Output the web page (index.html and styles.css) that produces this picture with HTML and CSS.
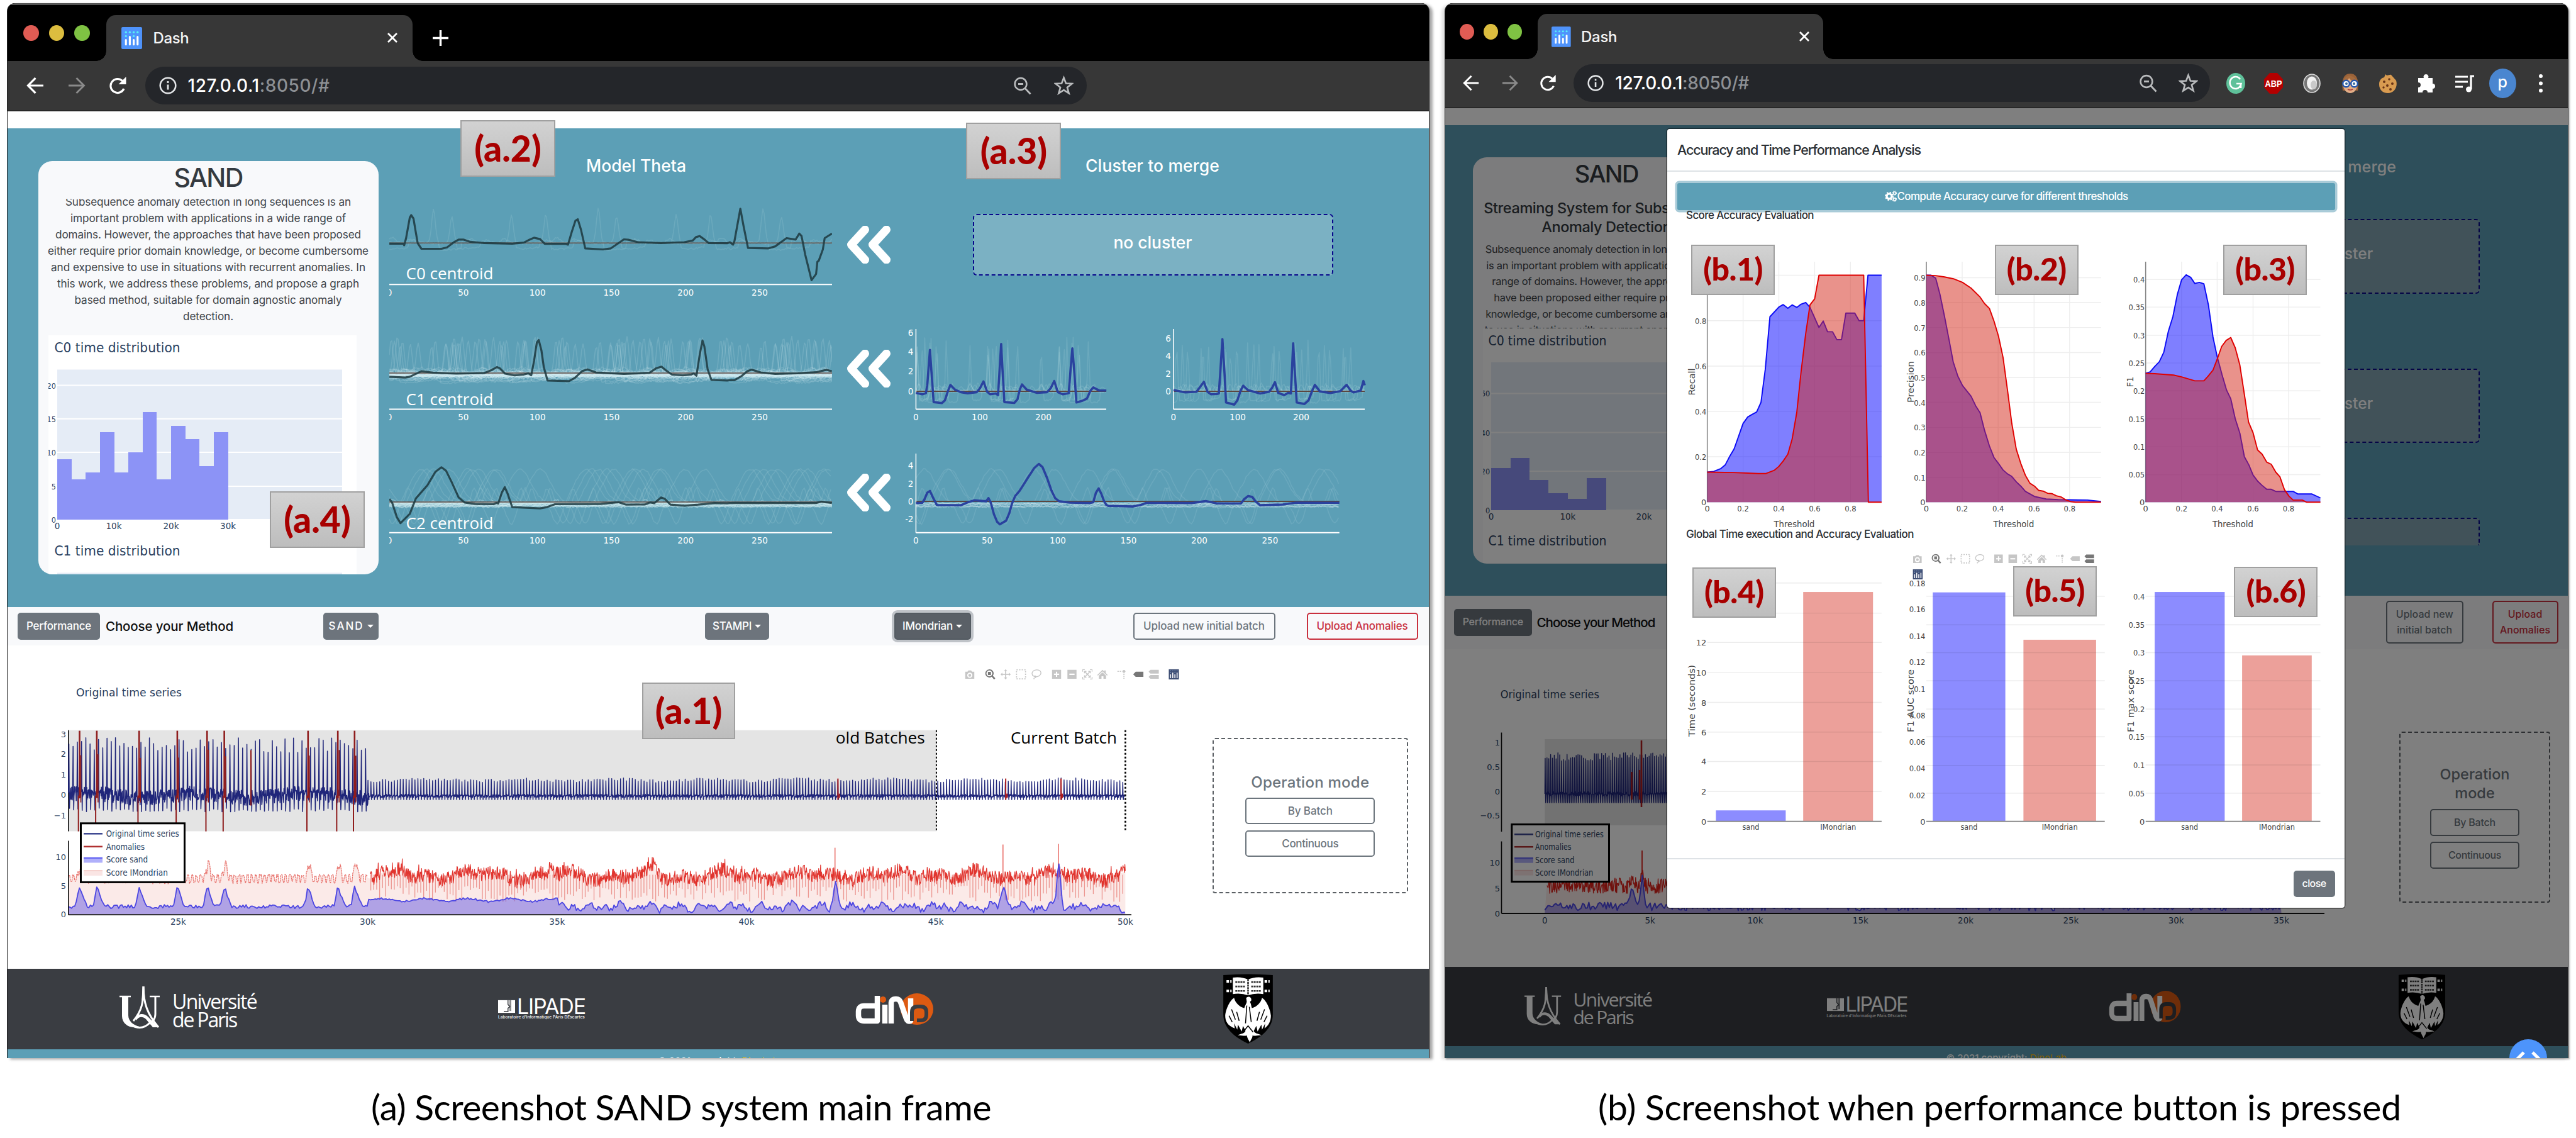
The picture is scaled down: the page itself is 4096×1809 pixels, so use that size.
FILE: index.html
```html
<!DOCTYPE html>
<html lang="en">
<head>
<meta charset="utf-8">
<title>SAND system</title>
<link rel="stylesheet" href="styles.css">
</head>
<body>
<svg class="defs" width="0" height="0" aria-hidden="true">
  <defs>
    <symbol id="i-dash" viewBox="0 0 32 34"><rect width="32" height="34" rx="2" fill="#4f93fb"/><g fill="#59f0f5"><circle cx="7" cy="8" r="1.6"/><circle cx="13" cy="8" r="1.6"/><circle cx="19" cy="8" r="1.6"/><circle cx="25" cy="8" r="1.6"/><circle cx="7" cy="14" r="1.6"/><circle cx="19" cy="14" r="1.6"/></g><g stroke="#fff" stroke-width="3" stroke-linecap="round"><path d="M7 20v7M13 15v12M19 20v7M25 15v12"/></g></symbol>
    <symbol id="i-close" viewBox="0 0 18 18"><path d="M2 2l14 14M16 2L2 16" stroke="#fff" stroke-width="2.8"/></symbol>
    <symbol id="i-back" viewBox="0 0 28 28"><path d="M27 14H3M14.500 2L2.500 14l12 12" fill="none" stroke="currentColor" stroke-width="3.2"/></symbol>
    <symbol id="i-fwd" viewBox="0 0 28 28"><path d="M1 14h24M13.500 2l12 12-12 12" fill="none" stroke="currentColor" stroke-width="3"/></symbol>
    <symbol id="i-reload" viewBox="0 0 28 28"><path d="M24 19a11 11 0 1 1-2.500-12.500" fill="none" stroke="#fff" stroke-width="3.2"/><path d="M27.500 0v12h-12z" fill="#fff"/></symbol>
    <symbol id="i-info" viewBox="0 0 28 28"><circle cx="14" cy="14" r="12.300" fill="none" stroke="#e4e6e8" stroke-width="2.600"/><path d="M14 12.500v8M14 7v3" stroke="#e4e6e8" stroke-width="2.800"/></symbol>
    <symbol id="i-mag" viewBox="0 0 28 28"><circle cx="11" cy="11" r="9.400" fill="none" stroke="#b9bbbd" stroke-width="2.600"/><path d="M18 18l8.500 9M7 11h8" stroke="#b9bbbd" stroke-width="2.800"/></symbol>
    <symbol id="i-star" viewBox="0 0 30 30"><path d="M15 3l3.300 8.600 9.200.5-7.200 5.800 2.500 9L15 21.800 7.200 26.900l2.500-9L2.500 12.100l9.200-.5z" fill="none" stroke="#b9bbbd" stroke-width="2.600"/></symbol>
    <symbol id="i-chev" viewBox="0 0 72 60"><path d="M30 6L8 30l22 24M64 6L42 30l22 24" fill="none" stroke="#fff" stroke-width="13" stroke-linecap="round" stroke-linejoin="round"/></symbol>
    <symbol id="i-gears" viewBox="0 0 20 18"><circle cx="7" cy="9" r="4" fill="none" stroke="#fff" stroke-width="3.200"/><circle cx="7" cy="9" r="6" fill="none" stroke="#fff" stroke-width="2" stroke-dasharray="2.350 2.350"/><circle cx="15.500" cy="4" r="2" fill="none" stroke="#fff" stroke-width="1.600"/><circle cx="15.500" cy="4" r="3.200" fill="none" stroke="#fff" stroke-width="1.200" stroke-dasharray="1.250 1.250"/><circle cx="15.500" cy="14" r="2" fill="none" stroke="#fff" stroke-width="1.600"/><circle cx="15.500" cy="14" r="3.200" fill="none" stroke="#fff" stroke-width="1.200" stroke-dasharray="1.250 1.250"/></symbol>
    <!-- plot mode bar -->
    <symbol id="m-camera" viewBox="0 0 16 16"><path fill-rule="evenodd" d="M1 4h3.500L6 2h4l1.500 2H15v11H1zM8 5.500a4 4 0 1 0 0 8 4 4 0 0 0 0-8zm0 1.800a2.200 2.200 0 1 1 0 4.400 2.200 2.200 0 0 1 0-4.400z"/></symbol>
    <symbol id="m-zoom" viewBox="0 0 16 16"><path fill-rule="evenodd" d="M6.700.3a6.300 6.300 0 1 0 3.600 11.500L14 16l2-1.800-3.900-4A6.300 6.300 0 0 0 6.700.3zm0 1.800a4.500 4.500 0 1 1 0 9 4.500 4.500 0 0 1 0-9z"/><path d="M4.500 4.300h4.600V9H4.500z"/></symbol>
    <symbol id="m-pan" viewBox="0 0 16 16"><path d="M8 0l2.500 3H8.800v4.200H13V5.500L16 8l-3 2.500V8.800H8.800V13h1.700L8 16l-2.500-3h1.700V8.800H3v1.700L0 8l3-2.500v1.700h4.200V3H5.500z"/></symbol>
    <symbol id="m-select" viewBox="0 0 16 16"><path d="M1 1h14v14H1z" fill="none" stroke="currentColor" stroke-width="1.800" stroke-dasharray="2 2"/></symbol>
    <symbol id="m-lasso" viewBox="0 0 16 16"><path d="M4 11C-.5 8.500.5 2 8 1.200c7-.5 9 5.500 4.500 9-3 2-6 2-8.500.8zm0 0c2-1.500 4 0 3 1.500S3 13 4.500 15.500" fill="none" stroke="currentColor" stroke-width="1.300"/></symbol>
    <symbol id="m-in" viewBox="0 0 16 16"><path fill-rule="evenodd" d="M1 1h14v14H1zM7 4v3H4v2h3v3h2V9h3V7H9V4z"/></symbol>
    <symbol id="m-out" viewBox="0 0 16 16"><path fill-rule="evenodd" d="M1 1h14v14H1zM4 7v2h8V7z"/></symbol>
    <symbol id="m-auto" viewBox="0 0 16 16"><path d="M.7 4V.7H4M12 .7h3.300V4M15.300 12v3.300H12M4 15.300H.7V12M4 4l8 8M12 4l-8 8M3.500 6.500v-3h3M9.500 3.500h3v3M12.500 9.500v3h-3M6.500 12.500h-3v-3" fill="none" stroke="currentColor" stroke-width="1.300"/></symbol>
    <symbol id="m-home" viewBox="0 0 16 16"><path d="M8 1L0 9l1 1 7-6.500L15 10l1-1-3-3V2h-2v2zM8 5l-5.500 5v5h4v-4h3v4h4v-5z"/></symbol>
    <symbol id="m-spike" viewBox="0 0 16 16"><path d="M2 3.500h7M12 7v8" stroke="currentColor" stroke-width="1.600" stroke-dasharray="2 1.500" fill="none"/><circle cx="12" cy="3.500" r="2.300"/></symbol>
    <symbol id="m-tag" viewBox="0 0 16 16"><path d="M0 8l4-4h12v8H4z"/></symbol>
    <symbol id="m-tags" viewBox="0 0 16 16"><path d="M0 4l3-3h13v6H3zM0 12l3-3h13v6H3z"/></symbol>
    <symbol id="m-logo" viewBox="0 0 16 16"><path d="M0 0h16v16H0z" fill="#3f4f75"/><path d="M3 8v6M6.300 5.500v8.500M9.600 8v6M13 5.500v8.500" stroke="#fff" stroke-width="1.500"/><path d="M2.500 2.700h11M2.500 5.200h1.200M9 5.200h1.200" stroke="#9fc5f3" stroke-width="1" stroke-dasharray="1.200 2.100"/></symbol>
    <!-- footer logos -->
    <symbol id="l-paris" viewBox="0 0 66 68"><path d="M0 16h18M48 16h16" stroke="#fff" stroke-width="2.500"/><path d="M4 16h10v30c0 9 8 16 18 18-14 4-28-3-28-17z" fill="#fff"/><path d="M9 50c4 14 26 22 39 8M57 16v28c0 8-5 13-10 15" fill="none" stroke="#fff" stroke-width="3"/><path d="M38 0c0 26-2 38-16 55M38 0c0 26 6 44 24 65" fill="none" stroke="#fff" stroke-width="3"/><path d="M25 50c4-7 14-8 20-2l17 17h-9L42 52c-5-4-11-5-15 2z" fill="#fff"/><path d="M36.500 0h3l1 22h-5z" fill="#fff"/></symbol>
    <symbol id="l-crest" viewBox="0 0 80 110"><path d="M1 2q39-3 78 0v62c0 22-18 36-39 46C19 100 1 86 1 64z" fill="#000"/><path d="M16 6q13-2 24 3 11-5 24-3v26q-13-2-24 2-11-4-24-2z" fill="#fff"/><path d="M40 9v25M20 13h15M20 20h15M20 27h15M45 13h15M45 20h15M45 27h15" stroke="#333" stroke-width="2.600" stroke-dasharray="3 1"/><path d="M6 12h8M6 27h8M66 12h8M66 27h8" stroke="#fff" stroke-width="4" stroke-dasharray="4 2"/><path d="M37 38c4-4 9-1 8 4l-2 2c2 4 2 7 3 10 8-2 14-8 16-16 6 3 13 17 14 28 0 9-4 16-10 20l1-8-5 10-1-8-6 11-2-9-4 8c2 5 8 4 12 7-8-1-9 2-14 0 0 5-3 6-4 11-2-4-4-6-5-11-5 2-8-1-14 0 4-3 10-2 12-7l-4-8-2 9-6-11-1 8-5-10 1 8C8 82 4 75 4 66c1-11 8-25 14-28 2 8 8 14 16 16 1-4 3-6 4-10z" fill="#fff"/><path d="M14 56l6 16M22 60l4 14M66 56l-6 16M58 60l-4 14M38 50l-2 28M42 52l3 24M32 92l8-10 8 10M10 66l5 10M70 66l-5 10" stroke="#000" stroke-width="1.500" fill="none"/></symbol>
    <symbol id="l-lipade" viewBox="0 0 36 27"><path d="M0 0h36v27H0z" fill="#fff"/><path d="M21 0v9l4 5-4 3v7h-9" fill="none" stroke="#3a3d42" stroke-width="2"/><path d="M24 0h4v23h-4z" fill="#3a3d42" opacity=".6"/></symbol>
  </defs>
</svg>

<main class="figure">
  <!-- ============ main frame ============ -->
  <figure class="shot shot-a">
    <div class="window">
      <div class="tabbar">
        <span class="dots"><i class="red"></i><i class="yellow"></i><i class="green"></i></span>
        <div class="tab"><svg class="favicon"><use href="#i-dash"/></svg><span class="tab-title">Dash</span><svg class="tab-x"><use href="#i-close"/></svg></div>
        <svg class="new-tab" viewBox="0 0 25 25"><path d="M12.500 0v25M0 12.500h25" stroke="#fff" stroke-width="3.400"/></svg>
      </div>
      <div class="toolbar">
        <svg class="nav back"><use href="#i-back"/></svg><svg class="nav fwd"><use href="#i-fwd"/></svg><svg class="nav reload"><use href="#i-reload"/></svg>
        <div class="url"><svg class="info"><use href="#i-info"/></svg><span class="addr" data-w="226">127.0.0.1<em>:8050/#</em></span><svg class="mag"><use href="#i-mag"/></svg><svg class="star"><use href="#i-star"/></svg></div>
      </div>
      <div class="page">
        <section class="hero">
          <article class="card">
            <h1 data-w="109">SAND</h1>
            <div class="abstract">
              <p><span data-w="454">Subsequence anomaly detection in long sequences is an</span><span data-w="438">important problem with applications in a wide range of</span><span data-w="486">domains. However, the approaches that have been proposed</span><span data-w="510">either require prior domain knowledge, or become cumbersome</span><span data-w="500">and expensive to use in situations with recurrent anomalies. In</span><span data-w="480">this work, we address these problems, and propose a graph</span><span data-w="425">based method, suitable for domain agnostic anomaly</span><span data-w="80">detection.</span></p>
            </div>
            <svg id="dist-a" class="dist" width="490.500" height="379.500" viewBox="77 533 490.500 379.500"></svg>
          </article>
          <div class="theta">
            <h2><span data-w="159">Model Theta</span></h2>
            <svg id="theta0" width="704.500" height="180" viewBox="618.500 300 704.500 180"></svg>
            <svg id="theta1" width="704.500" height="196" viewBox="618.500 480 704.500 196"></svg>
            <svg id="theta2" width="704.500" height="236" viewBox="618.500 676 704.500 236"></svg>
          </div>
          <div class="chevrons"><svg><use href="#i-chev"/></svg><svg><use href="#i-chev"/></svg><svg><use href="#i-chev"/></svg></div>
          <div class="merge">
            <h2><span data-w="213">Cluster to merge</span></h2>
            <div class="nocluster"><span data-w="125">no cluster</span></div>
            <svg id="merge1" width="736" height="196" viewBox="1440 480 736 196"></svg>
            <svg id="merge2" width="736" height="236" viewBox="1440 676 736 236"></svg>
          </div>
        </section>
        <section class="controls">
          <button class="btn solid perf"><span data-w="103">Performance</span></button><span class="choose" data-w="203">Choose your Method</span>
          <button class="btn solid m-sand"><span data-w="56">SAND</span><i class="caret"></i></button>
          <button class="btn solid m-stampi"><span data-w="62">STAMPI</span><i class="caret"></i></button>
          <button class="btn solid active m-imon"><span data-w="80">IMondrian</span><i class="caret"></i></button>
          <button class="btn line up-new"><span data-w="193">Upload new initial batch</span></button>
          <button class="btn danger up-anom"><span data-w="145">Upload Anomalies</span></button>
        </section>
        <section class="series">
          <svg id="series-a" width="1904" height="514" viewBox="12 1025.400 1904 514"></svg>
          <div class="mode"><h3><span data-w="188">Operation mode</span></h3><button class="btn line"><span data-w="71">By Batch</span></button><button class="btn line"><span data-w="90">Continuous</span></button></div>
        </section>
        <footer class="logos">
          <div class="paris"><svg><use href="#l-paris"/></svg><p><span data-w="134">Université</span><span data-w="102">de Paris</span></p></div>
          <div class="lipade"><p><svg><use href="#l-lipade"/></svg><span data-w="109">LIPADE</span></p><small data-w="138">Laboratoire d'Informatique PAris DEscartes</small></div>
          <svg class="dino" viewBox="0 0 123 50"><ellipse cx="97" cy="25" rx="26" ry="25" fill="#dd5a12"/><g fill="none" stroke="#fff" stroke-width="8.500" stroke-linejoin="round"><path d="M34 4v40H13q-9 0-9-9v-6q0-9 9-9h21"/><path d="M46 18v30"/><path d="M56 48V16q0-7 7-7h1q5 0 7 5l9 26q2 6 7 4V8"/></g><circle cx="43" cy="10" r="5" fill="#dd5a12"/><path d="M89 44V30q0-9 9-9h5q9 0 9 9v4q0 9-9 9h-6" fill="none" stroke="#3a3d42" stroke-width="6"/></svg>
          <svg class="crest"><use href="#l-crest"/></svg>
        </footer>
        <div class="strip"><span>© 2021 copyright: <b>DinoLab</b></span></div>
      </div>
    </div>
    <span class="badge a2">(a.2)</span><span class="badge a3">(a.3)</span><span class="badge a4">(a.4)</span><span class="badge a1">(a.1)</span>
    <figcaption><span data-w="986">(a) Screenshot SAND system main frame</span></figcaption>
  </figure>

  <!-- ============ performance dialog ============ -->
  <figure class="shot shot-b">
    <div class="window">
      <div class="tabbar">
        <span class="dots"><i class="red"></i><i class="yellow"></i><i class="green"></i></span>
        <div class="tab"><svg class="favicon"><use href="#i-dash"/></svg><span class="tab-title">Dash</span><svg class="tab-x"><use href="#i-close"/></svg></div>
      </div>
      <div class="toolbar">
        <svg class="nav back"><use href="#i-back"/></svg><svg class="nav fwd"><use href="#i-fwd"/></svg><svg class="nav reload"><use href="#i-reload"/></svg>
        <div class="url"><svg class="info"><use href="#i-info"/></svg><span class="addr" data-w="213">127.0.0.1<em>:8050/#</em></span><svg class="mag"><use href="#i-mag"/></svg><svg class="star"><use href="#i-star"/></svg></div>
        <div class="exts">
          <svg viewBox="0 0 30 33"><ellipse cx="15" cy="16.500" rx="15" ry="16.500" fill="#5fc19a"/><path d="M22 10a9 9.500 0 1 0 1.500 7H16M23 17v7" fill="none" stroke="#fff" stroke-width="2.600"/></svg>
          <svg viewBox="0 0 30 33"><path d="M9 0h12l9 10v13l-9 10H9L0 23V10z" fill="#b40000"/><text x="15" y="22" text-anchor="middle" textLength="27" lengthAdjust="spacingAndGlyphs" class="abp">ABP</text></svg>
          <svg viewBox="0 0 30 33"><ellipse cx="15" cy="16.500" rx="13" ry="14.500" fill="#777" stroke="#ddd" stroke-width="1.600"/><ellipse cx="15" cy="16" rx="8" ry="10.500" fill="#f2f2f2"/><ellipse cx="18" cy="19" rx="5" ry="7" fill="#c9c9c9"/></svg>
          <svg viewBox="0 0 30 33"><path d="M3 28C1 12 4 1 15 1s14 11 12 27z" fill="#9a6238"/><ellipse cx="15" cy="19" rx="11" ry="13" fill="#e2ad86"/><path d="M3 15C6 6 10 5 13 4c6 1 12 5 14 11-8-1-12-4-14-7-1 4-6 7-10 7z" fill="#a66c3e"/><circle cx="8.500" cy="17" r="5.300" fill="#fff" stroke="#2457b0" stroke-width="2.400"/><circle cx="21.500" cy="17" r="5.300" fill="#fff" stroke="#2457b0" stroke-width="2.400"/><circle cx="9" cy="17" r="2" fill="#3d6b9a"/><circle cx="21" cy="17" r="2" fill="#3d6b9a"/><path d="M11 26q4 2 8 0" stroke="#a33" stroke-width="1.500" fill="none"/></svg>
          <svg viewBox="0 0 30 33"><path d="M11 2c3 4 6 0 9 1l8 9c3 10-3 20-13 20C6 32 1 26 1 18 1 12 4 8 9 7z" fill="#d99b50"/><g fill="#6b3517"><circle cx="9" cy="14" r="2"/><circle cx="17" cy="10" r="1.800"/><circle cx="22" cy="17" r="2"/><circle cx="14" cy="20" r="2"/><circle cx="8" cy="23" r="1.700"/><circle cx="19" cy="26" r="2"/></g></svg>
          <svg viewBox="0 0 30 33"><path d="M2 8h9a4 4 0 1 1 7 0h7v9a4 4 0 1 1 0 8v6h-8a4 4 0 0 0-8 0H2v-8a4 4 0 0 0 0-8z" fill="#fff"/></svg>
          <svg viewBox="0 0 30 33"><path d="M0 6h20M0 14h20M0 22h12M25 26V5h5" stroke="#fff" stroke-width="3.200" fill="none"/><ellipse cx="21.500" cy="26" rx="4.500" ry="4.500" fill="#fff"/></svg>
          <span class="avatar">p</span>
          <svg viewBox="0 0 30 33"><g fill="#fff"><circle cx="15" cy="5" r="3"/><circle cx="15" cy="16.500" r="3"/><circle cx="15" cy="28" r="3"/></g></svg>
        </div>
      </div>
      <div class="page">
        <section class="hero">
          <article class="card">
            <h1 data-w="101">SAND</h1>
            <h4><span data-w="390">Streaming System for Subsequence</span><span data-w="206">Anomaly Detection</span></h4>
            <div class="abstract">
              <p><span data-w="385">Subsequence anomaly detection in long sequences</span><span data-w="382">is an important problem with applications in a wide</span><span data-w="364">range of domains. However, the approaches that</span><span data-w="358">have been proposed either require prior domain</span><span data-w="384">knowledge, or become cumbersome and expensive</span><span data-w="387">to use in situations with recurrent anomalies. In this</span></p>
            </div>
            <svg id="dist-b" class="dist" width="392" height="373.500" viewBox="2358.500 522 392 373.500"></svg>
          </article>
          <div class="merge">
            <h2><span data-w="200">Cluster to merge</span></h2>
            <div class="nocluster"><span data-w="118">no cluster</span></div>
            <div class="nocluster"><span data-w="118">no cluster</span></div>
            <div class="nocluster cut"></div>
          </div>
        </section>
        <section class="controls">
          <button class="btn solid perf"><span data-w="96">Performance</span></button><span class="choose" data-w="188">Choose your Method</span>
          <button class="btn line up-new"><span>Upload new<br>initial batch</span></button>
          <button class="btn danger up-anom"><span>Upload<br>Anomalies</span></button>
        </section>
        <section class="series">
          <svg id="series-b" width="1500" height="505" viewBox="2298 1032 1500 505"></svg>
          <div class="mode"><h3>Operation<br>mode</h3><button class="btn line"><span data-w="66">By Batch</span></button><button class="btn line"><span data-w="84">Continuous</span></button></div>
        </section>
        <footer class="logos">
          <div class="paris"><svg><use href="#l-paris"/></svg><p><span data-w="125">Université</span><span data-w="95">de Paris</span></p></div>
          <div class="lipade"><p><svg><use href="#l-lipade"/></svg><span data-w="98">LIPADE</span></p><small data-w="127">Laboratoire d'Informatique PAris DEscartes</small></div>
          <svg class="dino" viewBox="0 0 123 50" preserveAspectRatio="none"><ellipse cx="97" cy="25" rx="26" ry="25" fill="#dd5a12"/><g fill="none" stroke="#fff" stroke-width="8.500" stroke-linejoin="round"><path d="M34 4v40H13q-9 0-9-9v-6q0-9 9-9h21"/><path d="M46 18v30"/><path d="M56 48V16q0-7 7-7h1q5 0 7 5l9 26q2 6 7 4V8"/></g><circle cx="43" cy="10" r="5" fill="#dd5a12"/><path d="M89 44V30q0-9 9-9h5q9 0 9 9v4q0 9-9 9h-6" fill="none" stroke="#3a3d42" stroke-width="6"/></svg>
          <svg class="crest"><use href="#l-crest"/></svg>
        </footer>
        <div class="strip"><span>© 2021 copyright: <b>DinoLab</b></span></div>
        <div class="backdrop"></div>
        <div class="debug"><svg viewBox="0 0 60 60"><path d="M23 21l-9 9 9 9M37 21l9 9-9 9" fill="none" stroke="#fff" stroke-width="5"/></svg></div>
        <div class="modal">
          <header><span data-w="387">Accuracy and Time Performance Analysis</span></header>
          <div class="modal-body">
            <button class="compute"><svg><use href="#i-gears"/></svg><span data-w="367">Compute Accuracy curve for different thresholds</span></button>
            <h5 class="t1"><span data-w="203">Score Accuracy Evaluation</span></h5>
            <svg id="curves" width="1077" height="488" viewBox="2651.600 356 1077 488"></svg>
            <h5 class="t2"><span data-w="362">Global Time execution and Accuracy Evaluation</span></h5>
            <svg id="bars" width="1077" height="504" viewBox="2651.600 861.500 1077 504"></svg>
          </div>
          <div class="modal-foot"><button class="btn solid"><span data-w="38">close</span></button></div>
        </div>
      </div>
    </div>
    <span class="badge b1">(b.1)</span><span class="badge b2">(b.2)</span><span class="badge b3">(b.3)</span><span class="badge b4">(b.4)</span><span class="badge b5">(b.5)</span><span class="badge b6">(b.6)</span>
    <figcaption><span data-w="1275">(b) Screenshot when performance button is pressed</span></figcaption>
  </figure>
</main>
<script src="charts.js"></script>
</body>
</html>
```

FILE: styles.css
```css
* { box-sizing: border-box; }
body { margin: 0; width: 4096px; height: 1809px; overflow: hidden; background: #fff; font-family: Inter, "Liberation Sans", sans-serif; color: #343a40; }
h1, h2, h3, h4, h5, p, figure { margin: 0; font-weight: 500; }
svg { display: block; flex: none; }
button { font: inherit; margin: 0; padding: 0; }
.defs { position: absolute; }
[data-w] { white-space: nowrap; }

.figure { display: flex; padding: 5px 0 0 11px; }
.shot { position: relative; }
.shot-a { width: 2261.500px; --k: 1; --bar: 92px; --tool: 80px; }
.shot-b { width: 1786.500px; margin-left: 24.500px; --k: .934; --bar: 89px; --tool: 78px; }
.window { height: 1677px; display: flex; flex-direction: column; overflow: hidden; border-radius: 13px 13px 0 0; border-left: 1.500px solid #222; border-right: 1.500px solid #222; background: #373737; box-shadow: 5px 2px 4px rgba(0,0,0,.35); }
.shot-b .window { box-shadow: 2px 2px 3px rgba(0,0,0,.3), -5px 2px 4px rgba(0,0,0,.12); }

/* browser chrome */
.tabbar { flex: none; height: var(--bar); background: #000; border-top: 3px solid #555; display: flex; position: relative; }
.dots { display: flex; gap: calc(16.200px * var(--k)); margin: 31.500px 0 0 calc(25px * var(--k)); }
.dots i { width: calc(24.500px * var(--k)); height: 25.500px; border-radius: 50%; }
.shot-b .dots { margin-top: 29.500px; }
.red { background: #e05c54; } .yellow { background: #dcbd3f; } .green { background: #7fc243; }
.tab { position: relative; margin: 15.500px 0 0 calc(26.500px * var(--k)); width: calc(486.300px * var(--k)); background: #373737; border-radius: 15px 15px 0 0; display: flex; align-items: center; padding-left: calc(24px * var(--k)); }
.shot-b .tab { margin-top: 14px; }
.tab::before, .tab::after { content: ""; position: absolute; bottom: 0; width: 16px; height: 16px; }
.tab::before { left: -16px; background: radial-gradient(circle at 0 0, transparent 15.500px, #373737 16px); }
.tab::after { right: -16px; background: radial-gradient(circle at 100% 0, transparent 15.500px, #373737 16px); }
.favicon { width: calc(33px * var(--k)); height: 35px; }
.tab-title { color: #f4f4f4; font-size: 24px; margin-left: calc(17px * var(--k)); letter-spacing: -.3px; }
.tab-x { width: 18px; height: 18px; margin-left: auto; margin-right: calc(23px * var(--k)); }
.new-tab { width: 25px; height: 25px; margin: 40px 0 0 32px; }
.toolbar { flex: none; height: var(--tool); display: flex; align-items: center; border-bottom: 2px solid #282828; color: #fff; }
.nav { width: calc(28px * var(--k)); height: 28px; }
.back { margin-left: calc(30px * var(--k)); }
.fwd { margin-left: calc(38px * var(--k)); color: #8a8a8a; }
.reload { margin-left: calc(37px * var(--k)); }
.url { height: 60px; width: 1497px; margin-left: calc(29.500px * var(--k)); border-radius: 30px; background: #24262a; display: flex; align-items: center; padding: 0 21px; }
.shot-b .url { width: 1011.500px; }
.info { width: calc(28px * var(--k)); height: 28px; margin-left: 1px; }
.addr { font-size: 28px; margin-left: 18px; color: #fff; }
.addr em { font-style: normal; color: #8d9094; }
.mag { width: 28px; height: 29px; margin-left: auto; }
.star { width: 31px; height: 32px; margin-left: calc(36px * var(--k)); }
.shot-b .star { margin-right: -2px; }
.exts { display: flex; align-items: center; margin-left: 26px; gap: 30.700px; }
.exts svg { width: 30px; height: 33px; }
.avatar { width: 43px; height: 47px; margin: 0 -6.500px; border-radius: 50%; background: #4a86d0; font-size: 25px; line-height: 43px; text-align: center; }
.abp { font: 700 14px "Liberation Sans", sans-serif; fill: #fff; }

/* page */
.page { flex: 1; display: flex; flex-direction: column; position: relative; overflow: hidden; background: #fff; padding-top: 26.500px; }
.hero { flex: none; height: 761px; background: #5c9fb6; display: flex; color: #fff; }
.card { width: 541px; height: 657px; margin: 52px 0 0 48.500px; border-radius: 22px; background: #f8f9fb; color: #343a40; display: flex; flex-direction: column; align-items: center; overflow: hidden; }
.card h1 { font-size: 41px; line-height: 52px; height: 60.500px; font-weight: 500; flex: none; }
.abstract { flex: none; height: 217px; overflow: hidden; color: #3f4449; }
.abstract p { margin-top: -8px; font-size: 17.200px; font-weight: 400; line-height: 26.050px; display: flex; flex-direction: column; align-items: center; }
.dist { align-self: flex-start; margin-left: 16.300px; background: #fff; }
.theta { margin-left: 17px; }
.hero h2 { height: 96.400px; padding-top: 44.500px; font-size: 26.500px; line-height: 30px; font-weight: 500; }
.theta h2 { padding-left: 313.500px; }
.chevrons { margin: 155.400px 0 0 22px; display: flex; flex-direction: column; gap: 137px; }
.chevrons svg { width: 73px; height: 60px; }
.merge { margin-left: 22px; width: 736px; }
.merge h2 { padding-left: 286px; }
.nocluster { width: 573px; height: 98.500px; margin: 39.700px 0 41.800px 106.500px; padding-bottom: 8px; border: 2.500px dashed #08088c; border-radius: 6px; background: #7bb1c3; display: flex; align-items: center; justify-content: center; font-size: 26.500px; font-weight: 500; }

.btn { display: flex; align-items: center; justify-content: center; height: 43px; border-radius: 5px; font-size: 17px; line-height: 26px; border: 2px solid #6c757d; background: none; color: #6c757d; flex: none; }
.solid { background: #6d747c; color: #fff; }
.danger { border-color: #c9303e; color: #c9303e; }
.active { background: #5a6067; border-color: #545b62; box-shadow: 0 0 0 4px #bfc3c8; }
.caret { border: 5px solid transparent; border-top-color: #fff; border-bottom: 0; margin-left: 5px; }
.controls { flex: none; height: 61px; background: #f8f9fb; display: flex; align-items: center; }
.perf { width: 131px; margin-left: 16px; }
.choose { margin-left: 9px; font-size: 20.500px; color: #111; }
.m-sand { width: 88px; margin-left: 143px; }
.m-stampi { width: 102px; margin-left: 518.500px; }
.m-imon { width: 122px; margin-left: 199px; }
.up-new { width: 226px; margin-left: 258px; }
.up-anom { width: 177px; margin-left: 50px; }
.series { flex: none; height: 514px; display: flex; }
.mode { width: 311.500px; height: 246.500px; margin: 147.500px 0 0 11.500px; border: 2.500px dashed #5a5f64; border-radius: 4px; padding-top: 56px; display: flex; flex-direction: column; align-items: center; gap: 9.500px; }
.mode h3 { font-size: 24px; line-height: 25px; height: 27px; color: #6c757d; font-weight: 500; text-align: center; }
.mode .btn { width: 206px; height: 42.500px; flex: none; }
.logos { flex: none; height: 128px; background: #3a3d42; color: #fff; display: flex; align-items: flex-start; }
.paris { display: flex; margin: 28.500px 0 0 178px; width: 220px; }
.paris svg { width: 66px; height: 68px; }
.paris p { margin: 9px 0 0 18px; font: 400 32px/29px "Open Sans", "Noto Sans", sans-serif; display: flex; flex-direction: column; align-items: flex-start; }
.lipade { margin: 47px 0 0 382px; width: 139px; }
.lipade p { display: flex; align-items: center; height: 26px; }
.lipade p svg { width: 27px; height: 26px; }
.lipade p span { font: 400 34px/26px Inter, sans-serif; margin-left: 3px; }
.lipade small { display: block; width: max-content; font-size: 6.500px; line-height: 9px; }
.dino { width: 123px; height: 50px; margin: 39px 0 0 430px; overflow: visible; }
.crest { width: 81px; height: 111px; margin: 8.500px 0 0 460px; }
.strip { flex: 1; background: #5c9fb6; overflow: hidden; }
.strip span { display: block; text-align: center; padding-top: 9px; font-size: 15px; line-height: 20px; color: #fff; }
.strip b { color: #ffc107; font-weight: 400; }

figcaption { margin-top: 32px; text-align: left; padding-left: 579px; color: #000; font: 400 57px/90px Lato, sans-serif; white-space: nowrap; }
.shot-b figcaption { padding-left: 244px; }

.badge { position: absolute; width: 151px; height: 90px; background: linear-gradient(#d2d2d2, #bdbdbd); border: 2px solid #a0a0a0; color: #a80000; font: 900 57px/84px Lato, sans-serif; text-align: center; }
.a1 { left: 1010px; top: 1080px; width: 148px; } .a2 { left: 721px; top: 186px; } .a3 { left: 1525.400px; top: 190px; } .a4 { left: 418px; top: 776.300px; }
.shot-b .badge { width: 133px; height: 80px; font-size: 50px; line-height: 73px; letter-spacing: -.500px; }
.b1 { left: 392px; top: 384px; } .b2 { left: 874.700px; top: 384px; } .b3 { left: 1238px; top: 384px; }
.b4 { left: 393.800px; top: 897px; } .b5 { left: 904px; top: 894.500px; } .b6 { left: 1255.400px; top: 895.700px; }

/* second frame: narrower page */
.shot-b .hero { height: 748px; }
.shot-b .card { width: 424.500px; height: 646px; margin: 51.200px 0 0 44px; }
.shot-b .card h1 { font-size: 38px; height: 62px; line-height: 52px; }
.shot-b h4 { font-size: 23.500px; line-height: 30.200px; height: 70px; display: flex; flex-direction: column; align-items: center; flex: none; margin-top: 4px; }
.shot-b .abstract { height: 136.200px; }
.shot-b .abstract p { margin-top: -1.500px; line-height: 25.600px; font-size: 16.500px; }
.shot-b .dist { margin-left: 16px; }
.shot-b .merge { margin-left: 720px; width: 456px; }
.shot-b .merge h2 { padding: 51.500px 0 0 123.500px; height: 149.400px; font-size: 25px; }
.shot-b .nocluster { width: 456px; height: 118.700px; margin: 0 0 119px; font-size: 24.500px; background: #82a5b3; }
.shot-b .nocluster.cut { height: 44px; border-bottom: 0; border-radius: 6px 6px 0 0; }
.shot-b .controls { height: 85px; }
.shot-b .perf { width: 123.500px; margin-left: 14px; }
.shot-b .choose { margin-left: 8px; }
.shot-b .btn { font-size: 16px; line-height: 25.500px; }
.shot-b .up-new { width: 123.500px; height: 68px; margin-left: 1162px; }
.shot-b .up-anom { width: 105px; height: 68px; margin-left: 45.500px; }
.shot-b .series { height: 505.500px; }
.shot-b .mode { width: 240px; height: 272px; margin: 131px 0 0 17px; padding-top: 51px; }
.shot-b .mode h3 { line-height: 30px; height: 61px; font-size: 23.500px; }
.shot-b .mode .btn { width: 142px; }
.shot-b .logos { height: 126px; }
.shot-b .paris { margin: 28.500px 0 0 125.500px; }
.shot-b .paris svg { width: 60px; }
.shot-b .paris p { font-size: 30px; line-height: 28px; }
.shot-b .lipade { margin: 47px 0 0 261px; }
.shot-b .lipade small { font-size: 6px; }
.shot-b .lipade p span { font-size: 32px; }
.shot-b .dino { width: 113.500px; height: 50px; margin: 38px 0 0 310px; }
.shot-b .crest { width: 76px; height: 108px; margin: 8.500px 0 0 346px; }

.backdrop { position: absolute; inset: 0; background: rgba(0,0,0,.5); }
.debug { position: absolute; left: 1691.500px; top: 1480px; width: 60px; height: 60px; border-radius: 50%; background: #4d94fb; }
.modal { position: absolute; left: 353px; top: 33px; width: 1077px; height: 1238.400px; background: #fff; border-radius: 4px; box-shadow: 0 0 0 1.500px rgba(0,0,0,.45); display: flex; flex-direction: column; overflow: hidden; }
.modal header { flex: none; height: 68px; border-bottom: 2px solid #dee2e6; padding-left: 16px; font-size: 21.500px; font-weight: 500; line-height: 66px; color: #2b3035; }
.modal-body { height: 1092.500px; flex: none; display: flex; flex-direction: column; border-bottom: 2px solid #dee2e6; }
.compute { flex: none; margin: 17.500px 15px 0 16px; height: 43.500px; border: 0; border-radius: 3px; background: #5c9fb6; box-shadow: 0 0 0 3.500px #a9cbd8; color: #fff; font-size: 17px; display: flex; align-items: center; justify-content: center; }
.compute svg { width: 20px; height: 18px; }
.modal h5 { padding-left: 30px; font-size: 17px; color: #2b3035; }
.t1 { height: 22.500px; line-height: 16px; position: relative; z-index: 1; }
.t2 { height: 17.500px; line-height: 9px; position: relative; z-index: 1; }
.modal-body > h5 { flex: none; }
.modal-foot { display: flex; justify-content: flex-end; padding: 18px 15.500px 0 0; }
.modal-foot .btn { width: 66px; height: 42.500px; }

/* plots */
.plot-t { font-family: "DejaVu Sans", Verdana, sans-serif; }
.label-t { font-family: "Open Sans", "Noto Sans", sans-serif; }
```

FILE: charts.js
```js
const NS = 'http://www.w3.org/2000/svg';
const $ = id => document.getElementById(id);

function el(parent, tag, attrs) {
  const n = document.createElementNS(NS, tag);
  for (const k in attrs) n.setAttribute(k, attrs[k]);
  parent.appendChild(n);
  return n;
}
function line(s, x1, y1, x2, y2, stroke, w = 1.5, extra = {}) {
  return el(s, 'line', { x1, y1, x2, y2, stroke, 'stroke-width': w, ...extra });
}
function rect(s, x, y, width, height, fill, extra = {}) {
  return el(s, 'rect', { x, y, width, height, fill, ...extra });
}
function poly(s, pts, stroke, w, extra = {}) {
  return el(s, 'polyline', { points: pts.map(p => p[0].toFixed(1) + ',' + p[1].toFixed(1)).join(' '), fill: 'none', stroke, 'stroke-width': w, 'stroke-linejoin': 'round', ...extra });
}
function text(s, x, y, str, o = {}) {
  const a = { x, y, fill: o.fill || '#2a3f5f', 'font-size': o.size || 14, 'text-anchor': o.anchor || 'start', class: o.cls || 'plot-t' };
  if (o.w) { a.textLength = o.w; a.lengthAdjust = 'spacingAndGlyphs'; }
  if (o.rot) a.transform = `rotate(-90 ${x} ${y})`;
  el(s, 'text', a).textContent = str;
}
function rng(seed) {
  return () => { seed = (seed + 0x6D2B79F5) | 0; let t = Math.imul(seed ^ seed >>> 15, 1 | seed); t = t + Math.imul(t ^ t >>> 7, 61 | t) ^ t; return ((t ^ t >>> 14) >>> 0) / 4294967296; };
}
/* sampled curves: "x,y x,y ..." on a measuring grid, mapped to page units */
const grid = (ox, fx, oy, fy) => str => str.trim().split(/\s+/).map(p => { const [x, y] = p.split(',').map(Number); return [ox + x * fx, oy + y * fy]; });
const gA = grid(0, .7399, 0, .3263), gA2 = grid(0, .7399, 475.9, .3263);
const gC = grid(1160.1, .7209, 0, .3263), gC2 = grid(1160.1, .7209, 475.9, .3415);
const gL = grid(2284.5, .5691, 0, .5691), gR = grid(3153.1, .6014, 0, .5691);

/* ---------- time distribution histograms ---------- */
function histogram(s, o) {
  text(s, o.tx, o.ty, 'C0 time distribution', { size: 21.5, w: o.tw });
  rect(s, o.x, o.y0, o.w, o.y1 - o.y0, '#e5ecf6');
  o.grid.forEach(([y, l]) => { line(s, o.x, y, o.x + o.w, y, '#fff', 2); text(s, o.x - 2, y + 5, l, { size: 13, anchor: 'end', w: l.length * 7.2 }); });
  o.vals.forEach((v, i) => rect(s, o.x + i * o.bw, v, o.bw, o.y1 - v, '#8c93f6', { 'shape-rendering': 'crispEdges' }));
  o.ticks.forEach(([x, l]) => text(s, x, o.y1 + 15, l, { size: 13.5, anchor: 'middle' }));
  text(s, o.tx, o.ty2, 'C1 time distribution', { size: 21.5, w: o.tw });
  if (o.next) rect(s, o.x, o.next, o.w, 10, '#e5ecf6');
}
histogram($('dist-a'), { tx: 86.5, ty: 560, tw: 200, x: 91, w: 453, y0: 587.5, y1: 826, bw: 22.63, grid: [[612.6, '20'], [665.8, '15'], [719, '10'], [773, '5'], [826, '0']], vals: [9, 6, 7, 13, 7, 10, 16, 6, 14, 12, 8, 13].map(v => 826 - v * 10.67), ticks: [[91, '0'], [181, '10k'], [272, '20k'], [362.6, '30k']], ty2: 883, next: 910.5 });
histogram($('dist-b'), { tx: 2367, ty: 549, tw: 188, x: 2371.6, w: 370, y0: 576, y1: 811, bw: 30.45, grid: [[625.4, '60'], [687.5, '40'], [749, '20'], [811, '0']], vals: [743.8, 728.4, 762.6, 784.2, 793.3, 759.7], ticks: [[2371.6, '0'], [2493.4, '10k'], [2614.6, '20k']], ty2: 866.7 });

/* ---------- heartbeat style background members ---------- */
const g = (x, c, w) => Math.exp(-(((x - c) / w) ** 2));
function beat(p) { return g(p, .1, .016) + .1 * g(p, .3, .05) + .15 * g(p, .85, .03) - (p > .13 && p < .27 ? .2 : 0); }
function members(s, x0, x1, yc, amp, period, n, op, seed, jit) {
  const r = rng(seed);
  for (let k = 0; k < n; k++) {
    const ph = r(), a = amp * (.8 + r() * .25), off = (r() - .4) * jit, pts = [];
    for (let x = x0; x <= x1; x += 2) pts.push([x, yc + off - a * beat(((x - x0) / period + ph) % 1) + (r() - .5) * 3]);
    poly(s, pts, '#d4edf3', 1.6, { opacity: op });
  }
}
function humps(s, x0, x1, yc, up, down, n, op, seed) {
  const r = rng(seed);
  for (let k = 0; k < n; k++) {
    const c1 = r() * 260, pts = [];
    for (let x = x0; x <= x1; x += 3) {
      const d = (x - x0 + c1) % 262;
      pts.push([x, yc + (r() - .5) * 3 - up * g(d, 90, 24) + down * g(d, 45, 11) - up * .45 * g(d, 175, 6)]);
    }
    poly(s, pts, '#d4edf3', 1.6, { opacity: op });
  }
}
function thetaAxis(s, axis, base, zero, label, ly) {
  line(s, 618.5, axis, 1323, axis, '#fff', 2);
  line(s, 618.5, zero, 1323, zero, '#5b463f', 1.4);
  ['0', '50', '100', '150', '200', '250'].forEach((t, i) => text(s, 618.5 + i * 117.8, base, t, { size: 13.5, anchor: 'middle', fill: '#fff' }));
  text(s, 645, ly, label, { size: 25, w: 139, fill: '#fff', cls: 'label-t' });
}
const dark = (s, pts) => poly(s, pts, '#1f3b42', 3.2, { opacity: .88 });

let s = $('theta0');
members(s, 618.5, 1323, 386.3, 52, 262, 4, .13, 3, 1);
thetaAxis(s, 452.3, 470, 386.3, 'C0 centroid', 444);
dark(s, gA('836,1187 866,1187 868,1195 872,1160 880,1060 883,1048 888,1065 892,1120 897,1185 905,1212 948,1212 960,1205 975,1180 985,1167 995,1167 1010,1178 1040,1184 1100,1187 1125,1182 1135,1170 1147,1158 1160,1165 1170,1188 1215,1188 1220,1192 1228,1130 1236,1075 1241,1068 1248,1120 1257,1210 1295,1215 1312,1210 1328,1185 1340,1166 1350,1168 1370,1180 1420,1184 1470,1180 1488,1172 1495,1155 1503,1150 1512,1165 1522,1184 1562,1185').concat(gC('0,1180 7,1192 10,1175 23,1017 30,1100 40,1208 85,1210 100,1200 125,1160 145,1167 153,1138 158,1150 166,1240 180,1365 190,1335 193,1275 196,1270 205,1215 209,1160 225,1138')));

s = $('theta1');
members(s, 618.5, 1323, 594, 56, 262, 34, .16, 11, 6);
members(s, 618.5, 1323, 597, 5, 262, 14, .35, 12, 8);
thetaAxis(s, 650.4, 668, 593, 'C1 centroid', 644.3);
dark(s, gA2('836,377 870,381 880,377 905,350 930,357 980,362 1040,359 1055,345 1067,330 1073,335 1085,362 1105,370 1125,366 1135,360 1141,370 1147,300 1153,210 1157,198 1163,250 1168,330 1176,395 1222,398 1235,382 1250,350 1262,341 1280,356 1340,363 1395,358 1410,335 1421,328 1430,345 1443,366 1467,370 1485,366 1490,360 1496,372 1503,270 1509,200 1513,230 1520,340 1528,392 1562,395').concat(gC2('0,376 10,376 25,358 38,335 48,327 68,340 100,347 150,344 190,339 213,328 225,335')));

s = $('theta2');
humps(s, 618.5, 1323, 800, 54, 34, 12, .13, 21);
members(s, 618.5, 1323, 801, 4, 262, 18, .3, 22, 8);
thetaAxis(s, 846.8, 864, 798, 'C2 centroid', 841);
dark(s, gA2('836,972 842,990 852,1060 860,1090 880,1045 893,970 918,905 935,840 948,818 958,835 970,890 985,965 998,990 1020,997 1060,998 1066,992 1070,995 1078,940 1084,915 1090,945 1100,1012 1160,1018 1175,1012 1192,998 1290,997 1328,988 1345,1000 1385,999 1397,989 1405,993 1420,965 1428,972 1440,1000 1470,1005 1500,1000 1535,992 1562,994').concat(gC2('0,948 100,948 190,948 202,941 225,948')));

/* ---------- clusters to merge ---------- */
function mergeAxes(s, x0, x1, top, axis, zero, ys, xs, base) {
  line(s, x0, zero, x1, zero, '#5b463f', 2);
  line(s, x0, top, x0, axis, '#fff', 1.5);
  line(s, x0, axis, x1, axis, '#fff', 2);
  ys.forEach(([y, l]) => text(s, x0 - 4, y + 5, l, { size: 13.5, anchor: 'end', fill: '#fff' }));
  xs.forEach(([x, l]) => text(s, x, base, l, { size: 13.5, anchor: 'middle', fill: '#fff' }));
}
const navy = (s, pts) => poly(s, pts, '#2a429e', 3.6);
s = $('merge1');
members(s, 1456.4, 1759, 622, 82, 113, 12, .13, 31, 3);
members(s, 1865.8, 2170, 622, 80, 113, 11, .13, 32, 3);
mergeAxes(s, 1456.4, 1759, 523, 650.4, 622, [[528.8, '6'], [559.2, '4'], [590.3, '2'], [622.4, '0']], [[1456.4, '0'], [1558, '100'], [1659, '200']], 667.8);
mergeAxes(s, 1865.8, 2170, 523, 650.4, 622, [[537.7, '6'], [565.7, '4'], [593.7, '2'], [622.4, '0']], [[1865.8, '0'], [1968, '100'], [2069, '200']], 667.8);
navy(s, gC2('411,435 425,442 433,437 436,400 442,235 445,330 450,478 468,483 475,470 481,430 487,398 497,420 510,432 525,437 545,432 552,415 560,382 568,430 575,442 587,438 592,445 595,350 599,208 602,330 606,478 628,482 635,465 640,420 645,396 655,420 678,435 700,432 708,415 716,380 724,432 735,442 748,437 752,330 756,228 760,330 765,480 778,472 788,462 796,425 802,410 815,424 831,424'));
navy(s, gC2('979,422 1005,433 1030,430 1037,410 1046,384 1054,430 1062,442 1075,440 1079,438 1082,350 1087,185 1091,320 1095,480 1113,490 1120,470 1127,425 1133,402 1143,422 1170,438 1190,430 1197,410 1203,386 1210,435 1223,446 1232,435 1238,438 1240,350 1243,205 1247,350 1251,480 1268,487 1277,470 1285,425 1291,398 1302,428 1325,436 1347,427 1355,410 1361,398 1370,425 1376,433 1392,424 1398,380 1401,400'));
s = $('merge2');
humps(s, 1456.4, 2129.7, 800, 54, 34, 7, .12, 41);
members(s, 1456.4, 2129.7, 801, 4, 262, 8, .25, 42, 8);
mergeAxes(s, 1456.4, 2129.7, 721, 846.8, 797, [[740.2, '4'], [768.6, '2'], [797, '0'], [824.6, '-2']], [[1456.4, '0'], [1569.6, '50'], [1682, '100'], [1794.5, '150'], [1907, '200'], [2019.4, '250']], 864);
navy(s, gC2('411,948 425,947 430,930 436,900 442,892 448,920 457,957 510,958 525,945 540,935 566,940 571,925 576,945 583,1000 590,1035 596,1047 610,1030 617,995 623,950 630,915 640,890 658,830 672,785 682,766 690,780 700,830 710,890 718,925 727,940 750,946 795,948 802,945 808,900 814,880 820,905 826,940 831,957 835,961 890,964 905,958 920,947 1020,948 1050,939 1075,950 1128,950 1135,930 1144,915 1153,920 1160,940 1170,958 1220,955 1250,946 1345,947'));

/* ---------- mode bar ---------- */
function modebar(s, items, y, size) {
  items.forEach(([id, x, on]) => el(s, 'use', { href: '#m-' + id, x: x - size / 2, y: y - size / 2, width: size, height: size, fill: on ? '#777' : '#c6c6c6', color: on ? '#777' : '#c6c6c6' }));
}
function legend(s, x, y, w, h, tx, sw, rows) {
  rect(s, x + 1.5, y + 1.5, w - 3, h - 3, '#fff', { stroke: '#000', 'stroke-width': 3 });
  const names = ['Original time series', 'Anomalies', 'Score sand', 'Score IMondrian'], ws = [.983, .52, .563, .833];
  names.forEach((n, i) => text(s, tx, rows[i] + 5, n, { size: 13.8, w: 118 * ws[i] * (w / 168) }));
  line(s, sw, rows[0], sw + 30, rows[0], '#3b4590', 2.5);
  line(s, sw, rows[1], sw + 30, rows[1], '#b03030', 2.5);
  rect(s, sw, rows[2] - 3, 30, 8, '#b0b0fa'); line(s, sw, rows[2] - 2.5, sw + 30, rows[2] - 2.5, '#6a6af2', 2.5);
  rect(s, sw, rows[3] - 3, 30, 8, '#fae5e4'); line(s, sw, rows[3] - 3, sw + 30, rows[3] - 3, '#f5c9c6', 1.5);
}

/* ---------- original series, first frame ---------- */
s = $('series-a');
{
  const r = rng(77), X0 = 108.8, X30 = 584.6, X1 = 1789.4;
  text(s, 121, 1106, 'Original time series', { size: 18, w: 168 });
  rect(s, X0, 1160.2, 1380.1, 160.6, '#e4e4e4');
  line(s, X0, 1160.2, X0, 1321, '#111', 1.6);
  const anom = [171, 208, 299, 381, 445, 482, 662, 726, 762].map(v => v * .7399);
  let pts = [];
  for (let x = X0; x < X30; x += 6.74) {
    const wob = Math.sin(x / 28) * 4, top = 1184 + (r() - .5) * 24;
    pts.push([x, 1262 + wob], [x + .7, top], [x + 1.3, 1262], [x + 1.7, 1284 + r() * 6]);
    for (let k = 2.2; k < 6.6; k += .5) pts.push([x + k, 1264 + wob + (r() - .5) * 24]);
  }
  poly(s, pts, '#20267a', 1.5);
  pts = [];
  for (let x = X30; x < X1; x += 4.67) {
    const top = 1239.5 + (r() - .5) * 5 + Math.sin(x / 23) * 1.5;
    pts.push([x, 1264], [x + .5, top], [x + 1, 1264], [x + 1.4, 1270.5]);
    for (let k = 1.8; k < 4.6; k += .5) pts.push([x + k, 1264.6 + (r() - .5) * 5]);
  }
  poly(s, pts, '#20267a', 1.4);
  anom.forEach(x => { line(s, x - 1.8, 1264, x - 1.8, 1321, '#8f1d1d', 2); line(s, x, 1161, x, 1268, '#8f1d1d', 2.6); line(s, x + 2, 1190 + r() * 15, x + 2, 1275, '#8f1d1d', 1.6); });
  line(s, 399, 1192, 399, 1280, '#8f1d1d', 2);
  [239, 609, 731].forEach(v => { const x = 1160.1 + v * .7209; line(s, x, 1237, x, 1271, '#b01c1c', 2); line(s, x + 2, 1261, x + 2, 1268, '#b01c1c', 2); });
  line(s, 1488.9, 1160.2, 1488.9, 1321, '#000', 2, { 'stroke-dasharray': '3 3' });
  line(s, X1, 1160.2, X1, 1319, '#000', 2.6, { 'stroke-dasharray': '3 3' });
  [[1166, '3'], [1197.7, '2'], [1230.4, '1'], [1262.7, '0'], [1295.3, '−1']].forEach(([y, l]) => text(s, 105, y + 5, l, { size: 13, anchor: 'end' }));
  text(s, 1328.8, 1181.4, 'old Batches', { size: 25, w: 142, fill: '#000', cls: 'label-t' });
  text(s, 1607, 1181.4, 'Current Batch', { size: 25, w: 169, fill: '#000', cls: 'label-t' });

  /* scores */
  const peak = [[232.5, 1057], [603, 1050], [725, 1080]].map(v => 1160.1 + v[0] * .7209);
  let low = [];
  for (let x = X0; x < X30; x += 1.1) {
    let y = 1391 + (Math.sin(x * .93) < -.2 ? 9 + r() * 3 : 0) + (r() - .5) * 4;
    anom.forEach(a => { y -= 25 * g(x, a + 2, 3.4); });
    low.push([x, y]);
  }
  const wander = x => 1391 + 5 * Math.sin(x / 21) + 4 * Math.sin(x / 9.3 + 1) - 9 * g(x, 640, 8) - 12 * g(x, 876, 6) - 12 * g(x, 1038, 6) - 10 * g(x, 1472, 8);
  let hi = [];
  for (let x = X30 + 4; x < X1; x += .75) hi.push([x, wander(x) + (r() - .5) * 24 - (r() > .97 ? 8 : 0)]);
  const area = low.concat([[X30, 1395]], hi.map(p => [p[0], wander(p[0])]));
  el(s, 'polygon', { points: [[X0, 1453]].concat(area, [[X1, 1453]]).map(p => p.join(',')).join(' '), fill: '#fbeae8' });
  for (let x = X30 + 5; x < X1; x += 4.67) { const b = 1407 + r() * 26; line(s, x, 1390, x, b, '#e05048', 1.3, { opacity: .55 }); }
  poly(s, low, '#e8746e', 1.3, { 'stroke-dasharray': '3 .8' });
  poly(s, hi, '#de2019', 1.2, { opacity: .9 });
  peak.forEach((x, i) => line(s, x, [1347, 1342, 1341][i], x, 1395, '#e8655f', 1.5));
  const blue = [];
  for (let x = X0; x <= X1; x += 2.5) {
    let y;
    if (x < X30) y = 1440.5 + (r() - .5) * 6;
    else if (x < 888) y = 1430 + 2.5 * Math.sin(x / 11) + (r() - .5) * 3;
    else y = 1441 + 7 * Math.sin(x / 5.1) * Math.sin(x / 17) + (r() - .5) * 9;
    if (x < X30) anom.forEach(a => { y -= 29 * g(x, a, 4) + 12 * g(x, a + 6, 4); });
    else { y -= 40 * g(x, peak[0] + 1, 5) + 38 * g(x, peak[1] + 1, 5) + 72 * g(x, peak[2] + 1, 4); }
    blue.push([x, Math.min(y, 1452)]);
  }
  el(s, 'polygon', { points: [[X0, 1453]].concat(blue, [[X1, 1453]]).map(p => p.join(',')).join(' '), fill: 'rgb(108,96,226)', 'fill-opacity': .52 });
  poly(s, blue, '#4c46e2', 1.8);
  line(s, X0, 1336, X0, 1453.6, '#111', 1.6);
  line(s, X0, 1453.6, 1799, 1453.6, '#111', 1.8);
  [[1361.6, '10'], [1407.3, '5'], [1452.9, '0']].forEach(([y, l]) => text(s, 105, y + 5, l, { size: 13, anchor: 'end' }));
  ['25k', '30k', '35k', '40k', '45k', '50k'].forEach((l, i) => text(s, 283.4 + 301.2 * i, 1469.3, l, { size: 13.5, anchor: 'middle' }));
  legend(s, 127, 1306.7, 168, 96.6, 168.7, 133, [1324.7, 1345.2, 1365.8, 1386.3]);
  modebar(s, [['camera', 1542], ['zoom', 1574.5, 1], ['pan', 1599], ['select', 1623.5], ['lasso', 1648], ['in', 1680], ['out', 1704.5], ['auto', 1729], ['home', 1753], ['spike', 1783], ['tag', 1810, 1], ['tags', 1834.5], ['logo', 1866.5]], 1071.3, 16.5);
}

/* ---------- original series, second frame ---------- */
s = $('series-b');
{
  const r = rng(5), X0 = 2456.4, X1 = 2700;
  text(s, 2385.8, 1110.4, 'Original time series', { size: 17.5, w: 157 });
  rect(s, X0, 1175, 1200, 137, '#e4e4e4');
  line(s, 2387.5, 1164.5, 2387.5, 1322, '#111', 1.6);
  [[1180, '1'], [1219.3, '0.5'], [1258, '0'], [1296, '−0.5']].forEach(([y, l]) => text(s, 2385, y + 5, l, { size: 13, anchor: 'end' }));
  let pts = [];
  for (let x = X0; x < X1; x += 2.9) pts.push([x, 1262], [x + .5, 1203 + (r() - .5) * 13], [x + 1, 1262], [x + 1.4, 1276], [x + 2, 1262 + (r() - .5) * 7], [x + 2.5, 1262 + (r() - .5) * 7]);
  poly(s, pts, '#20267a', 1.4);
  [[2594.5, 1227, 1271], [2607, 1224, 1271], [2610, 1177, 1283]].forEach(([x, a, b]) => line(s, x, a, x, b, '#b01c1c', 2.6));
  const red = [];
  for (let x = X0 + 3; x < X1; x += .7) red.push([x, 1408 + (r() - .5) * 25 - 24 * g(x, 2611, 3) - 12 * g(x, 2596, 3)]);
  el(s, 'polygon', { points: `${X0},1452 ` + red.map(p => p.join(',')).join(' ') + ` ${X1},1452`, fill: '#fbeae8' });
  poly(s, red, '#de2019', 1.3);
  line(s, 2611, 1352, 2611, 1400, '#de2019', 1.8);
  const blue = [];
  for (let x = X0; x <= 3627.6; x += 2.5) { let y = 1441 + (r() - .5) * 13; y -= 36 * g(x, 2595, 4) + 44 * g(x, 2611, 4); blue.push([x, y]); }
  el(s, 'polygon', { points: `${X0},1452 ` + blue.map(p => p.join(',')).join(' ') + ' 3627.6,1452', fill: '#b0a3e4' });
  poly(s, blue, '#4c46e2', 2);
  line(s, 2387.5, 1337.5, 2387.5, 1452, '#111', 1.6);
  line(s, 2387.5, 1452, 3696, 1452, '#111', 1.8);
  [[1370.5, '10'], [1411.5, '5'], [1452, '0']].forEach(([y, l]) => text(s, 2385, y + 5, l, { size: 13, anchor: 'end' }));
  ['0', '5k', '10k', '15k', '20k', '25k', '30k', '35k'].forEach((l, i) => text(s, 2456.4 + 167.3 * i, 1468, l, { size: 13.5, anchor: 'middle' }));
  legend(s, 2402.3, 1309, 157.7, 94, 2441, 2408, [1326.3, 1346.2, 1366.7, 1386.6]);
}

/* ---------- accuracy curves ---------- */
const GRID = '#eeeeee', INK = '#444';
function curvePlot(s, o) {
  o.gy.forEach(([y, l]) => { line(s, o.x0, y * .5691, o.x1, y * .5691, GRID, 1.4); });
  o.gx.forEach(([x], i) => { if (i) line(s, x, 415, x, 797.3, GRID, 1.4); });
  const area = (pts, fill, stroke) => {
    el(s, 'polygon', { points: [[o.x0, 797.3]].concat(pts, [[o.x1, 797.3]]).map(p => p.join(',')).join(' '), fill, 'fill-opacity': .5 });
    poly(s, pts, stroke, 1.9);
  };
  line(s, o.x0, 415, o.x0, 797.3, '#888', 1.6);
  area(o.blue, 'rgb(0,0,255)', '#0b0bf5');
  area(o.red, 'rgb(211,37,24)', '#e00000');
  o.gy.forEach(([y, l]) => { if (l) text(s, o.x0 - 1.5, y * .5691 + 5, l, { size: 13, anchor: 'end', fill: INK, w: l.length > 1 ? l.length * 7.6 - 4.6 : 0 }); });
  o.gx.forEach(([x, l]) => text(s, x, 811.5, l, { size: 13, anchor: 'middle', fill: INK, w: l.length > 1 ? 18.5 : 0 }));
  text(s, o.cx, 837, 'Threshold', { size: 14.5, anchor: 'middle', fill: INK, w: 65 });
  text(s, o.tx, 606, o.title, { size: 14, anchor: 'middle', fill: INK, rot: 1, w: o.tw });
}
s = $('curves');
curvePlot(s, {
  x0: 2715.3, x1: 2992.5, cx: 2853.6, tx: 2696, title: 'Recall', tw: 43,
  gy: [[767, ''], [894, '0.8'], [1021, '0.6'], [1148, '0.4'], [1274, '0.2'], [1401, '0']],
  gx: [[2715.3, '0'], [2772.2, '0.2'], [2829.1, '0.4'], [2886, '0.6'], [2943, '0.8']],
  blue: gL('757,1317 775,1315 795,1307 807,1297 820,1272 832,1252 845,1215 857,1181 870,1163 882,1156 895,1149 907,1122 919,1030 932,883 957,856 969,849 982,859 994,850 1007,857 1019,848 1032,843 1044,857 1069,913 1081,895 1093,925 1107,925 1119,947 1132,947 1144,873 1169,873 1181,894 1194,894 1206,767 1244,767'),
  red: gL('757,1317 830,1318 900,1321 920,1321 944,1312 957,1301 969,1286 982,1267 994,1225 1007,1150 1019,1037 1032,930 1044,850 1057,833 1069,767 1194,767 1207,1401 1244,1401')
});
curvePlot(s, {
  x0: 3063.6, x1: 3341.3, cx: 3202.5, tx: 3044, title: 'Precision', tw: 66,
  gy: [[774, '0.9'], [843, '0.8'], [913, '0.7'], [983, '0.6'], [1053, '0.5'], [1122, '0.4'], [1192, '0.3'], [1262, '0.2'], [1332, '0.1'], [1401, '0']],
  gx: [[3063.6, '0'], [3120.6, '0.2'], [3177.8, '0.4'], [3234.9, '0.6'], [3291.4, '0.8']],
  blue: gL('1369,767 1382,767 1395,775 1407,820 1420,883 1433,950 1444,1009 1457,1049 1470,1075 1494,1105 1507,1132 1519,1151').concat(gR('5,1200 18,1244 30,1276 42,1293 54,1311 66,1322 77,1329 89,1344 101,1356 113,1371 137,1385 168,1392 200,1394 277,1395 313,1399')),
  red: gL('1369,767 1395,768 1420,772 1445,777 1470,787 1494,803 1519,828').concat(gR('5,846 18,860 30,895 42,938 54,997 66,1090 77,1180 89,1253 101,1293 113,1326 125,1348 137,1356 148,1368 160,1370 172,1376 183,1377 195,1383 207,1386 219,1394 232,1399 245,1401 313,1401'))
});
curvePlot(s, {
  x0: 3412.3, x1: 3690.1, cx: 3551, tx: 3393, title: 'F1', tw: 17,
  gy: [[779, '0.4'], [856, '0.35'], [935, '0.3'], [1012, '0.25'], [1090, '0.2'], [1168, '0.15'], [1246, '0.1'], [1324, '0.05'], [1401, '0']],
  gx: [[3412.3, '0'], [3469.4, '0.2'], [3526, '0.4'], [3583.1, '0.6'], [3639.6, '0.8']],
  blue: gR('431,1041 443,1037 455,1022 467,1009 479,982 491,924 503,883 515,820 526,780 538,766 550,773 561,790 573,787 585,791 597,850 609,940 620,994 633,1045 645,1088 656,1112 668,1168 680,1208 692,1274 704,1297 715,1325 727,1342 739,1354 751,1365 763,1365 775,1371 821,1371 833,1378 870,1378 893,1389'),
  red: gR('431,1041 455,1042 505,1046 526,1051 561,1062 585,1062 597,1048 609,1032 620,1002 632,966 644,949 656,941 668,970 680,1018 692,1100 703,1177 715,1207 727,1255 739,1267 751,1289 763,1295 775,1317 786,1330 798,1366 810,1384 821,1395 845,1395 857,1401 893,1401')
});

/* ---------- time and score bars ---------- */
const by = v => 832.9 + v * .6222;
function barPlot(s, o) {
  o.bars.forEach(([x, w, top, c, l]) => { rect(s, x, by(top), w, by(759) - by(top), c); text(s, x + w / 2, by(774) + 4.5, l, { size: 12, anchor: 'middle', fill: INK, w: l === 'sand' ? 27 : 57 }); });
  o.lines.forEach(y => line(s, o.x0, by(y), o.x1, by(y), '#000', 1.4, { opacity: .07 }));
  line(s, o.x0, by(759), o.x1, by(759), '#8c8c8c', 2);
  o.labels.forEach(([y, l]) => text(s, o.x0 - 1.5, by(y) + 5, l, { size: 13, anchor: 'end', fill: INK, w: l.length > 2 ? l.length * 7.6 - 4.6 : 0 }));
  text(s, o.tx, by(451), o.title, { size: 14, anchor: 'middle', fill: INK, rot: 1, w: o.tw });
}
const B = '#8c8cff', R = '#eca09a';
s = $('bars');
barPlot(s, { x0: 2715.3, x1: 2992.5, bars: [[2729, 111, 731, B, 'sand'], [2867.8, 111, 173, R, 'IMondrian']], lines: [150, 227, 302, 378, 455, 531, 606, 683], labels: [[302, '12'], [378, '10'], [455, '8'], [531, '6'], [606, '4'], [683, '2'], [759, '0']], tx: 2696, title: 'Time (seconds)', tw: 114 });
barPlot(s, { x0: 3063.6, x1: 3347.3, bars: [[3073.8, 115.4, 174, B, 'sand'], [3218, 115.5, 295, R, 'IMondrian']], lines: [184, 257, 328, 400, 472, 543, 616, 687], labels: [[150, '0.18'], [217, '0.16'], [286, '0.14'], [352, '0.12'], [421, '0.1'], [488, '0.08'], [556, '0.06'], [623, '0.04'], [692, '0.02'], [759, '0']], tx: 3044, title: 'F1 AUC score', tw: 100 });
barPlot(s, { x0: 3412.3, x1: 3690.1, bars: [[3426.7, 111.3, 173, B, 'sand'], [3565.7, 110.7, 335, R, 'IMondrian']], lines: [184, 257, 328, 400, 472, 543, 615, 687], labels: [[184, '0.4'], [257, '0.35'], [328, '0.3'], [400, '0.25'], [472, '0.2'], [543, '0.15'], [615, '0.1'], [687, '0.05'], [759, '0']], tx: 3393.5, title: 'F1 max score', tw: 100 });
modebar(s, [['camera', 3049.4], ['zoom', 3079.5, 1], ['pan', 3102.9], ['select', 3125.6], ['lasso', 3148.4], ['in', 3178.4], ['out', 3201], ['auto', 3224], ['home', 3247], ['spike', 3275.8], ['tag', 3299.8], ['tags', 3322.7, 1]], 887.7, 15.5);
modebar(s, [['logo', 3050]], 912.5, 16);

/* ---------- track text to its measure ---------- */
document.querySelectorAll('[data-w]').forEach(n => {
  n.style.width = 'max-content';
  if (getComputedStyle(n).display === 'inline') n.style.display = 'inline-block';
  const w = n.getBoundingClientRect().width;
  n.style.letterSpacing = ((n.dataset.w - w) / n.textContent.length).toFixed(3) + 'px';
});
```
